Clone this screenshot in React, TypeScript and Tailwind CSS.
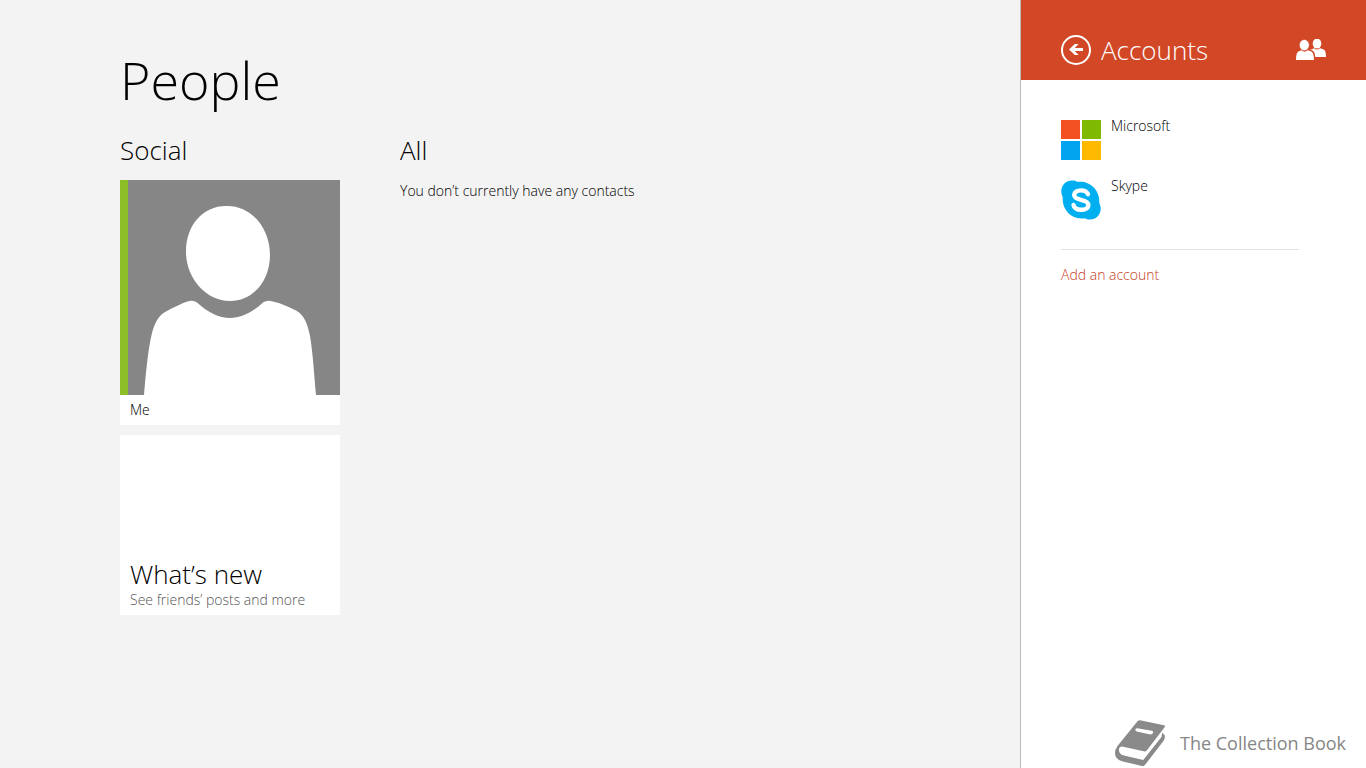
import React from "react";

function BackIcon() {
  return (
    <svg viewBox="0 0 30 30" className="size-[30px]" fill="none" stroke="currentColor" aria-hidden="true">
      <circle cx="15" cy="15" r="14" strokeWidth="2" />
      <path d="M10 14.5H22" strokeWidth="3" />
      <path d="M8 14.5L13.8 9H17.6L12.3 14.5L17.6 20H13.8Z" fill="currentColor" stroke="none" />
    </svg>
  );
}

function PeopleIcon() {
  return (
    <svg viewBox="0 0 30 22" className="h-[22px] w-[30px]" fill="currentColor" aria-hidden="true">
      <ellipse cx="21" cy="4.6" rx="4.3" ry="5" />
      <path d="M14.5 10.8Q16.5 9.8 18 9.3Q21 11.8 24 9.3Q27 9.8 28.4 11.1Q30 12.800 30 18H19.2Q19 13.1 16.500 11.6Z" />
      <ellipse cx="8.3" cy="6.1" rx="5" ry="5.6" stroke="#d24726" strokeWidth="0.6" />
      <path d="M0 21Q0 14.800 1.8 13.1Q3 11.9 5.5 11.3Q8.5 14 11.8 11.3Q14.7 11.9 16 13.1Q18 15.1 18 21Z" />
    </svg>
  );
}

function MicrosoftLogo() {
  return (
    <svg viewBox="0 0 40 40" className="size-10 shrink-0" aria-hidden="true">
      <path fill="#f25022" d="M0 0h19v19H0z" />
      <path fill="#7fba00" d="M21 0h19v19H21z" />
      <path fill="#00a4ef" d="M0 21h19v19H0z" />
      <path fill="#ffb900" d="M21 21h19v19H21z" />
    </svg>
  );
}

function SkypeLogo() {
  return (
    <svg viewBox="0 0 40 40" className="size-10 shrink-0" aria-hidden="true">
      <path
        fill="#00aff0"
        d="M11 .5C13.200 .5 15 1 16.600 1.900C28 .2 39.400 9.500 38.300 23.300C39.200 25 39.700 26.900 39.700 28.800C39.700 34.900 35 39.600 29 39.600C27 39.600 25.100 39.100 23.500 38.200C11.500 40.300 .5 30.500 1.700 16.700C.8 15 .3 13.100 .3 11.200C.3 5.200 5 .5 11 .5Z"
      />
      <path
        d="M27 14.2C25.8 11.4 23.2 10.4 20 10.4C16 10.4 13.2 12.1 13.2 15C13.2 18 16.2 19 20 19.8C24.2 20.7 27.3 21.9 27.3 25C27.3 28.2 24.2 29.8 20.1 29.8C16.2 29.8 13.2 28.3 12.5 25"
        fill="none"
        stroke="#fff"
        strokeWidth="4.4"
        strokeLinecap="round"
      />
    </svg>
  );
}

function BookIcon() {
  return (
    <svg viewBox="0 0 51 47" className="h-[47px] w-[51px] shrink-0" aria-hidden="true">
      <path
        fill="#8a8a8a"
        fillRule="evenodd"
        d="M22.5 1.2Q23.5 0 25 .2L49 5.2Q50.6 5.6 49.6 7.2L31.8 30.4Q30.6 31.7 28.7 31.3L7 26.4Q4.2 26.4 4 29.5Q3.8 33.7 8 35.2L28.2 40.1L45.7 18.1Q46.8 16.8 46.7 15.8L47.3 12.5L49.8 15.4Q50 18.8 48.8 20.4L30.3 44.6Q29 46.6 26.8 46.1L7 41.2Q.1 39.2 0 33.2Q0 29.4 2.3 26.2ZM22.2 8.3Q20.5 8.1 20.3 9.8Q20.3 11.1 21.7 11.5L35.4 14.4Q37.2 14.6 38.2 12.4Q38.3 11.1 36.8 10.8Z"
      />
    </svg>
  );
}

function Avatar() {
  return (
    <svg viewBox="0 0 212 215" className="block h-[215px] min-w-0 flex-1 bg-[#868686]" fill="#fff" role="img" aria-label="Me">
      <path d="M98 26C122 25 142 47 142 75C142 101 125 121 102 121C78 121 58 98 58 72C58 45 75 26 98 26Z" />
      <path d="M16 215C18 192 20 169 24 153C27 142 31 135 38 131.500C44 128 53 124 58 122Q65 119.500 69 122.500C91 143 113 143 135 122.500Q139 119.500 145 121.500C153 123 160 127 168 130.500C177 135 180 146 182 156C185 174 186 193 188 215Z" />
    </svg>
  );
}

const accounts = [
  { name: "Microsoft", Logo: MicrosoftLogo },
  { name: "Skype", Logo: SkypeLogo },
];

export default function App() {
  return (
    <div className="flex min-h-screen bg-[#f3f3f3] font-['Open_Sans','Noto_Sans',sans-serif] text-sm font-light text-black">
      <main className="min-w-0 flex-1 pt-[45px] pl-[120px]">
        <h1 className="text-[52px] leading-[70px] font-light">People</h1>
        <div className="mt-[15px] flex gap-[60px]">
          <section className="w-[220px]">
            <h2 className="text-[26px] leading-10">Social</h2>
            <a href="#me" className="mt-[10px] block bg-white">
              <span className="flex border-l-8 border-[#8cbf26]">
                <Avatar />
              </span>
              <span className="block px-[10px] leading-[30px]">Me</span>
            </a>
            <a href="#whats-new" className="mt-[10px] flex h-[180px] flex-col justify-end bg-white px-[10px] pb-[5px]">
              <span className="text-[26px] leading-8">What’s new</span>
              <span className="leading-5 text-[#555]">See friends’ posts and more</span>
            </a>
          </section>
          <section>
            <h2 className="text-[26px] leading-10">All</h2>
            <p className="mt-[10px] leading-[22px]">You don’t currently have any contacts</p>
          </section>
        </div>
      </main>

      <aside className="flex w-[346px] flex-col border-l border-[#bcbcbc] bg-white">
        <header className="flex h-20 items-center bg-[#d24726] px-10 pt-5 text-white">
          <button type="button" aria-label="Back" className="mr-[10px]">
            <BackIcon />
          </button>
          <h2 className="flex-1 text-[26px] leading-10">Accounts</h2>
          <PeopleIcon />
        </header>
        <ul className="flex flex-col gap-5 px-10 pt-10">
          {accounts.map(({ name, Logo }) => (
            <li key={name}>
              <button type="button" className="flex w-full items-start gap-[10px] text-left">
                <Logo />
                <span className="leading-3">{name}</span>
              </button>
            </li>
          ))}
        </ul>
        <hr className="mt-[29px] mr-[67px] ml-10 border-[#e1e1e1]" />
        <a href="#add-account" className="mt-[15px] ml-10 self-start leading-5 text-[#c63a1c]">
          Add an account
        </a>
        <footer className="mt-auto flex items-center gap-[14px] self-end pr-5 pb-px text-[#868686]">
          <BookIcon />
          <span className="pb-0.5 text-lg leading-6 font-normal">The Collection Book</span>
        </footer>
      </aside>
    </div>
  );
}
